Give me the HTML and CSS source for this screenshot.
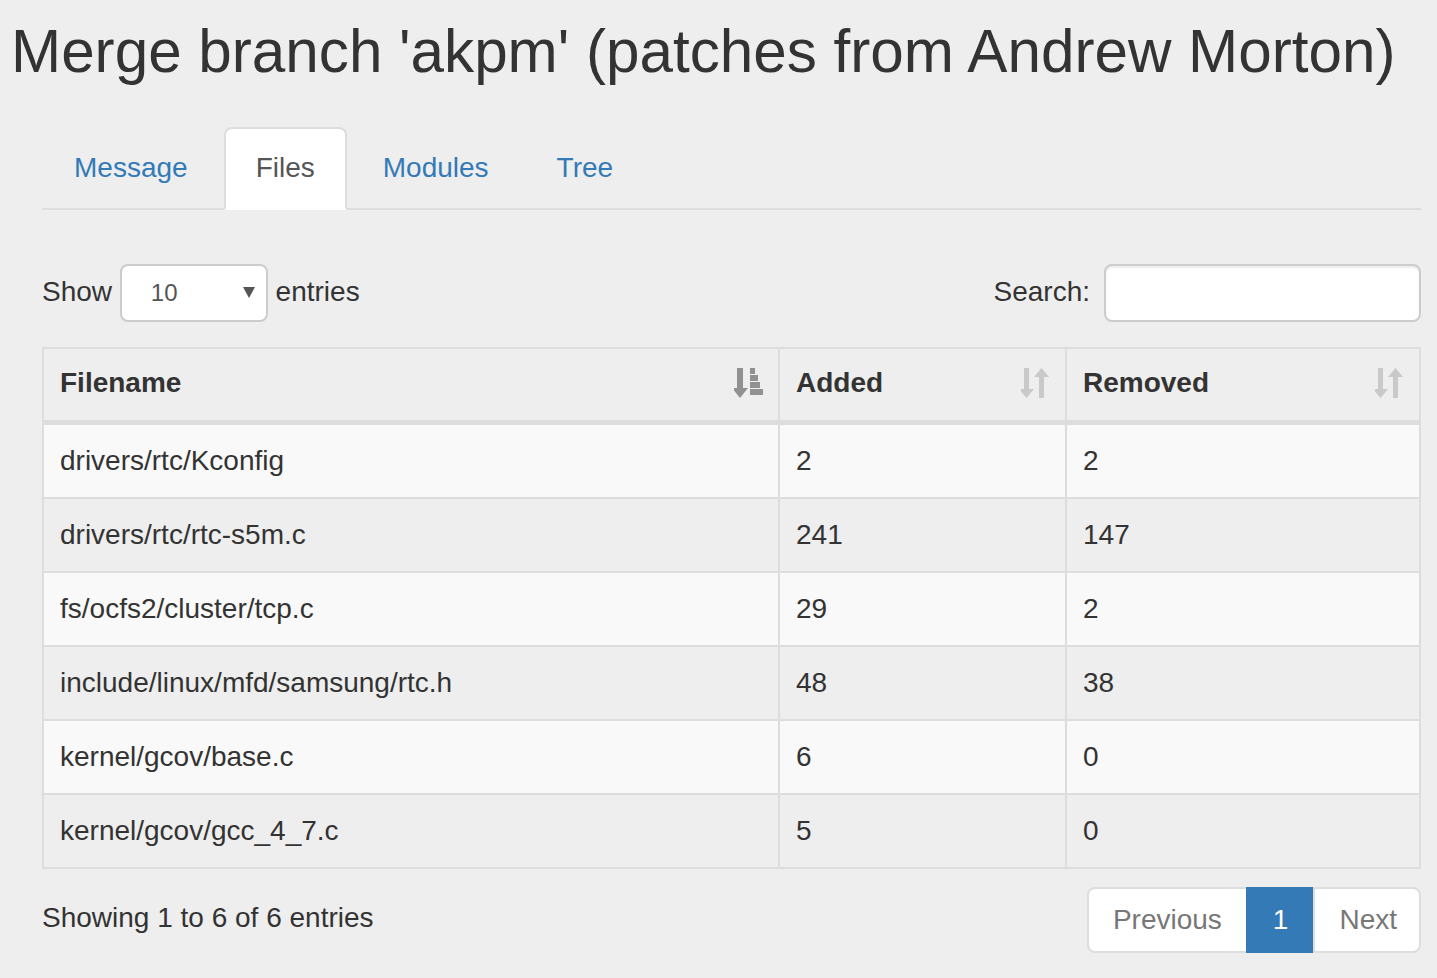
FILE: index.html
```html
<!DOCTYPE html>
<html>
<head>
<meta charset="utf-8">
<link rel="stylesheet" href="styles.css">
</head>
<body>
<h2 class="title">Merge branch 'akpm' (patches from Andrew Morton)</h2>
<div class="content">
  <ul class="tabs">
    <li class="tab"><a class="tab-link">Message</a></li>
    <li class="tab active"><a class="tab-link">Files</a></li>
    <li class="tab"><a class="tab-link">Modules</a></li>
    <li class="tab"><a class="tab-link">Tree</a></li>
  </ul>

  <div class="controls">
    <label class="length">Show <span class="select"><span class="select-val">10</span><svg class="select-arrow" width="12" height="11" viewBox="0 0 12 11"><path d="M0 0h12l-6 11z" fill="#555555"/></svg></span> entries</label>
    <label class="filter">Search:<span class="search-input"></span></label>
  </div>

  <table class="grid">
    <thead>
      <tr>
        <th class="c1"><span class="th-inner">Filename
          <svg class="sort" width="29" height="31" viewBox="0 0 29 31"><g fill="#919191"><path d="M3 0h6v20h5l-8 10l-8-10h5z"/><rect x="16" y="0" width="5" height="6"/><rect x="16" y="7" width="8" height="6"/><rect x="16" y="14" width="10" height="6"/><rect x="16" y="21" width="13" height="6"/></g></svg></span></th>
        <th class="c2"><span class="th-inner">Added
          <svg class="sort" width="29" height="31" viewBox="0 0 29 31"><g fill="#c9c9c9"><path d="M3 0h5v21h5l-7.5 9l-7.5-9h5z"/><path d="M18 30h5v-21h5l-7.5-9l-7.5 9h5z"/></g></svg></span></th>
        <th class="c3"><span class="th-inner">Removed
          <svg class="sort" width="29" height="31" viewBox="0 0 29 31"><g fill="#c9c9c9"><path d="M3 0h5v21h5l-7.5 9l-7.5-9h5z"/><path d="M18 30h5v-21h5l-7.5-9l-7.5 9h5z"/></g></svg></span></th>
      </tr>
    </thead>
    <tbody>
      <tr class="odd"><td>drivers/rtc/Kconfig</td><td>2</td><td>2</td></tr>
      <tr class="even"><td>drivers/rtc/rtc-s5m.c</td><td>241</td><td>147</td></tr>
      <tr class="odd"><td>fs/ocfs2/cluster/tcp.c</td><td>29</td><td>2</td></tr>
      <tr class="even"><td>include/linux/mfd/samsung/rtc.h</td><td>48</td><td>38</td></tr>
      <tr class="odd"><td>kernel/gcov/base.c</td><td>6</td><td>0</td></tr>
      <tr class="even"><td>kernel/gcov/gcc_4_7.c</td><td>5</td><td>0</td></tr>
    </tbody>
  </table>

  <div class="footer">
    <div class="info">Showing 1 to 6 of 6 entries</div>
    <ul class="pagination">
      <li class="page disabled first"><a>Previous</a></li>
      <li class="page current"><a>1</a></li>
      <li class="page disabled last"><a>Next</a></li>
    </ul>
  </div>
</div>
</body>
</html>
```

FILE: styles.css
```css
* { box-sizing: border-box; }
html, body { margin: 0; padding: 0; }
body {
  background: #eeeeee;
  color: #333333;
  font-family: "Liberation Sans", Arial, Helvetica, sans-serif;
  font-size: 28px;
  line-height: 40px;
}
.title {
  margin: 19px 0 0 11px;
  font-size: 60.2px;
  font-weight: 500;
  line-height: 66px;
  white-space: nowrap;
}
.content {
  margin: 0 16px 0 42px;
}
.tabs {
  list-style: none;
  margin: 42px 0 0 0;
  padding: 0;
  display: flex;
  border-bottom: 2px solid #dddddd;
}
.tab {
  margin-bottom: -2px;
  margin-right: 4px;
}
.tab-link {
  display: block;
  padding: 19px 30px 20px;
  line-height: 40px;
  border: 2px solid transparent;
  border-radius: 8px 8px 0 0;
  color: #337ab7;
}
.tab.active .tab-link {
  color: #555555;
  background: #ffffff;
  border-color: #dddddd #dddddd transparent;
}
.controls {
  display: flex;
  justify-content: space-between;
  align-items: center;
  margin-top: 54px;
  height: 58px;
}
.length, .filter {
  display: flex;
  align-items: center;
  white-space: pre;
  position: relative;
  top: -1px;
}
.select {
  display: inline-flex;
  align-items: center;
  justify-content: space-between;
  width: 148px;
  height: 58px;
  padding: 0 11px 0 29px;
  background: #ffffff;
  border: 2px solid #cccccc;
  border-radius: 8px;
  font-size: 24px;
  color: #555555;
  position: relative;
  top: 1px;
}
.select-arrow {
  display: block;
  margin-top: -1px;
}
.search-input {
  display: block;
  width: 317px;
  height: 58px;
  margin-left: 14px;
  background: #ffffff;
  border: 2px solid #cccccc;
  border-radius: 8px;
  box-shadow: inset 0 2px 2px rgba(0,0,0,0.075);
  position: relative;
  top: 1px;
}
.grid {
  margin-top: 25px;
  width: 1379px;
  table-layout: fixed;
  border-collapse: separate;
  border-spacing: 0;
  border-top: 2px solid #dddddd;
  border-left: 2px solid #dddddd;
}
.grid th, .grid td {
  padding: 16px;
  line-height: 40px;
  text-align: left;
  border-right: 2px solid #dddddd;
  border-bottom: 2px solid #dddddd;
}
.grid th {
  font-weight: bold;
  padding: 14px 16px 17px;
  border-bottom-width: 5px;
}
.grid th.c1 { width: 736px; }
.grid th.c2 { width: 287px; }
.grid th.c3 { width: 354px; }
.th-inner {
  display: flex;
  align-items: center;
  justify-content: space-between;
}
.sort {
  display: block;
  margin-right: -1px;
}
.grid tr.odd td { background: #f9f9f9; }
.grid tr.even td { background: #eeeeee; }
.footer {
  display: flex;
  justify-content: space-between;
  align-items: flex-start;
  margin-top: 18px;
}
.info {
  margin-top: 11px;
}
.pagination {
  list-style: none;
  margin: 0;
  padding: 0;
  display: flex;
}
.page a {
  display: block;
  padding: 11px 24px;
  line-height: 40px;
  border: 2px solid #dddddd;
  margin-left: -2px;
  background: #ffffff;
  color: #777777;
}
.page.first a { margin-left: 0; border-radius: 8px 0 0 8px; }
.page.last a { border-radius: 0 8px 8px 0; padding-right: 22px; }
.page.current a {
  background: #337ab7;
  border-color: #337ab7;
  color: #ffffff;
  padding-left: 25px;
  padding-right: 25px;
}
```
